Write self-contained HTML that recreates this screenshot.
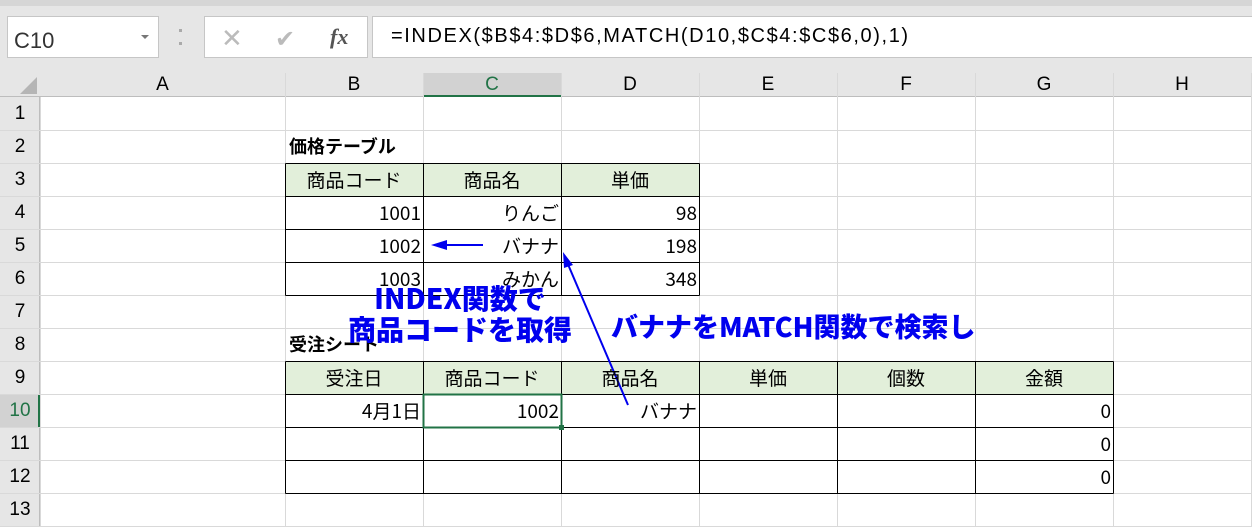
<!DOCTYPE html>
<html><head><meta charset="utf-8"><style>
body{margin:0;width:1252px;height:527px;overflow:hidden;background:#fff;font-family:"Liberation Sans","Noto Sans CJK JP",sans-serif;position:relative}
.a{position:absolute;box-sizing:border-box}
.c{position:absolute;box-sizing:border-box;font-size:19px;line-height:33px;white-space:nowrap;font-family:"Noto Sans CJK JP","Liberation Sans",sans-serif;color:#000}
</style></head><body>
<div class="a" style="left:0;top:0;width:1252px;height:73px;background:#e6e6e6"></div>
<div class="a" style="left:0;top:0;width:1252px;height:6px;background:#d6d6d6"></div>
<div class="a" style="left:7px;top:16px;width:152px;height:42px;background:#fff;border:1px solid #c6c6c6"></div>
<div class="c" style="left:14px;top:24px;font-size:22px;font-family:'Liberation Sans',sans-serif;color:#333">C10</div>
<div class="a" style="left:141px;top:35px;border-left:4px solid transparent;border-right:4px solid transparent;border-top:4px solid #777"></div>
<div class="a" style="left:179px;top:29px;width:3px;height:16px;border-top:3px dotted #aaa;border-bottom:3px dotted #aaa"></div>
<div class="a" style="left:204px;top:16px;width:164px;height:42px;background:#fff;border:1px solid #c6c6c6"></div>
<div class="c" style="left:221px;top:20px;font-size:26px;color:#bbb">✕</div>
<div class="c" style="left:275px;top:20px;font-size:24px;color:#bbb">✔</div>
<div class="c" style="left:330px;top:20px;font-size:22px;font-style:italic;font-family:'Liberation Serif',serif;color:#555;font-weight:bold">fx</div>
<div class="a" style="left:372px;top:16px;width:885px;height:42px;background:#fff;border:1px solid #c6c6c6"></div>
<div class="c" style="left:391px;top:20px;font-size:20px;letter-spacing:1.6px;font-family:'Liberation Sans',sans-serif;font-weight:normal">=INDEX($B$4:$D$6,MATCH(D10,$C$4:$C$6,0),1)</div>
<div class="a" style="left:0;top:73px;width:1252px;height:24px;background:#e6e6e6;border-bottom:1px solid #bdbdbd"></div>
<div class="a" style="left:0;top:97px;width:40px;height:430px;background:#e6e6e6;border-right:1px solid #bdbdbd"></div>
<div class="a" style="left:423px;top:73px;width:138px;height:24px;background:#d2d2d2;border-bottom:2px solid #217346"></div>
<div class="a" style="left:0;top:394px;width:40px;height:33px;background:#d2d2d2;border-right:2px solid #217346"></div>
<div class="a" style="left:20px;top:77px;border-left:17px solid transparent;border-bottom:17px solid #b5b5b5"></div>
<svg class="a" style="left:0;top:0" width="1252" height="527">
<g stroke="#d9d9d9" stroke-width="1">
<line x1="40.5" y1="97" x2="40.5" y2="527"/>
<line x1="285.5" y1="73" x2="285.5" y2="527"/><line x1="423.5" y1="73" x2="423.5" y2="527"/><line x1="561.5" y1="73" x2="561.5" y2="527"/><line x1="699.5" y1="73" x2="699.5" y2="527"/><line x1="837.5" y1="73" x2="837.5" y2="527"/><line x1="975.5" y1="73" x2="975.5" y2="527"/><line x1="1113.5" y1="73" x2="1113.5" y2="527"/><line x1="1251.5" y1="73" x2="1251.5" y2="527"/>
<line x1="0" y1="130.5" x2="1252" y2="130.5"/><line x1="0" y1="163.5" x2="1252" y2="163.5"/><line x1="0" y1="196.5" x2="1252" y2="196.5"/><line x1="0" y1="229.5" x2="1252" y2="229.5"/><line x1="0" y1="262.5" x2="1252" y2="262.5"/><line x1="0" y1="295.5" x2="1252" y2="295.5"/><line x1="0" y1="328.5" x2="1252" y2="328.5"/><line x1="0" y1="361.5" x2="1252" y2="361.5"/><line x1="0" y1="394.5" x2="1252" y2="394.5"/><line x1="0" y1="427.5" x2="1252" y2="427.5"/><line x1="0" y1="460.5" x2="1252" y2="460.5"/><line x1="0" y1="493.5" x2="1252" y2="493.5"/><line x1="0" y1="526.5" x2="1252" y2="526.5"/>
</g>
<rect x="286" y="164" width="413" height="32" fill="#e2efda"/>
<rect x="286" y="362" width="827" height="32" fill="#e2efda"/>
<g stroke="#000" stroke-width="1">
<line x1="285.5" y1="163.5" x2="699.5" y2="163.5"/><line x1="285.5" y1="196.5" x2="699.5" y2="196.5"/><line x1="285.5" y1="229.5" x2="699.5" y2="229.5"/><line x1="285.5" y1="262.5" x2="699.5" y2="262.5"/><line x1="285.5" y1="295.5" x2="699.5" y2="295.5"/>
<line x1="285.5" y1="163.5" x2="285.5" y2="295.5"/><line x1="423.5" y1="163.5" x2="423.5" y2="295.5"/><line x1="561.5" y1="163.5" x2="561.5" y2="295.5"/><line x1="699.5" y1="163.5" x2="699.5" y2="295.5"/>
<line x1="285.5" y1="361.5" x2="1113.5" y2="361.5"/><line x1="285.5" y1="394.5" x2="1113.5" y2="394.5"/><line x1="285.5" y1="427.5" x2="1113.5" y2="427.5"/><line x1="285.5" y1="460.5" x2="1113.5" y2="460.5"/><line x1="285.5" y1="493.5" x2="1113.5" y2="493.5"/>
<line x1="285.5" y1="361.5" x2="285.5" y2="493.5"/><line x1="423.5" y1="361.5" x2="423.5" y2="493.5"/><line x1="561.5" y1="361.5" x2="561.5" y2="493.5"/><line x1="699.5" y1="361.5" x2="699.5" y2="493.5"/><line x1="837.5" y1="361.5" x2="837.5" y2="493.5"/><line x1="975.5" y1="361.5" x2="975.5" y2="493.5"/><line x1="1113.5" y1="361.5" x2="1113.5" y2="493.5"/>
</g>
<rect x="423.5" y="394.5" width="138" height="33" fill="none" stroke="#217346" stroke-width="2"/>
<rect x="559" y="425" width="5" height="5" fill="#217346"/>
<g stroke="#0000ee" stroke-width="2" fill="#0000ee">
<line x1="483" y1="245" x2="442" y2="245"/><polygon points="431,245 447,240 447,250" stroke="none"/>
<line x1="628" y1="405" x2="567" y2="262"/><polygon points="563,252 573,265 564,268" stroke="none"/>
</g>
</svg>
<div style="position:absolute;left:0;top:73px;width:1252px;height:24px;font-size:19px;line-height:24px;color:#000">
<span class="a" style="left:40px;width:245px;text-align:center">A</span><span class="a" style="left:285px;width:138px;text-align:center">B</span><span class="a" style="left:423px;width:138px;text-align:center;color:#217346">C</span><span class="a" style="left:561px;width:138px;text-align:center">D</span><span class="a" style="left:699px;width:138px;text-align:center">E</span><span class="a" style="left:837px;width:138px;text-align:center">F</span><span class="a" style="left:975px;width:138px;text-align:center">G</span><span class="a" style="left:1113px;width:138px;text-align:center">H</span></div>
<div style="position:absolute;left:0;top:97px;width:40px;font-size:19px;line-height:33px;text-align:center">
<div>1</div><div>2</div><div>3</div><div>4</div><div>5</div><div>6</div><div>7</div><div>8</div><div>9</div><div style="color:#217346">10</div><div>11</div><div>12</div><div>13</div></div>
<div class="c" style="left:289px;top:130px;font-weight:bold;font-size:18px">価格テーブル</div>
<div class="c" style="left:285px;top:163px;width:138px;text-align:center">商品コード</div>
<div class="c" style="left:423px;top:163px;width:138px;text-align:center">商品名</div>
<div class="c" style="left:561px;top:163px;width:138px;text-align:center">単価</div>
<div class="c" style="left:285px;top:196px;width:136px;text-align:right">1001</div>
<div class="c" style="left:423px;top:196px;width:136px;text-align:right">りんご</div>
<div class="c" style="left:561px;top:196px;width:136px;text-align:right">98</div>
<div class="c" style="left:285px;top:229px;width:136px;text-align:right">1002</div>
<div class="c" style="left:423px;top:229px;width:136px;text-align:right">バナナ</div>
<div class="c" style="left:561px;top:229px;width:136px;text-align:right">198</div>
<div class="c" style="left:285px;top:262px;width:136px;text-align:right">1003</div>
<div class="c" style="left:423px;top:262px;width:136px;text-align:right">みかん</div>
<div class="c" style="left:561px;top:262px;width:136px;text-align:right">348</div>
<div class="c" style="left:289px;top:328px;font-weight:bold;font-size:18px">受注シート</div>
<div class="c" style="left:285px;top:361px;width:138px;text-align:center">受注日</div>
<div class="c" style="left:423px;top:361px;width:138px;text-align:center">商品コード</div>
<div class="c" style="left:561px;top:361px;width:138px;text-align:center">商品名</div>
<div class="c" style="left:699px;top:361px;width:138px;text-align:center">単価</div>
<div class="c" style="left:837px;top:361px;width:138px;text-align:center">個数</div>
<div class="c" style="left:975px;top:361px;width:138px;text-align:center">金額</div>
<div class="c" style="left:285px;top:394px;width:136px;text-align:right">4月1日</div>
<div class="c" style="left:423px;top:394px;width:136px;text-align:right">1002</div>
<div class="c" style="left:561px;top:394px;width:136px;text-align:right">バナナ</div>
<div class="c" style="left:975px;top:394px;width:136px;text-align:right">0</div>
<div class="c" style="left:975px;top:427px;width:136px;text-align:right">0</div>
<div class="c" style="left:975px;top:460px;width:136px;text-align:right">0</div>
<div class="c" style="left:330px;top:283px;width:260px;text-align:center;font-size:28px;line-height:31px;font-weight:900;color:#0000ee">INDEX関数で<br>商品コードを取得</div>
<div class="c" style="left:611px;top:309px;font-size:27px;line-height:34px;font-weight:900;color:#0000ee">バナナをMATCH関数で検索し</div>
</body></html>
